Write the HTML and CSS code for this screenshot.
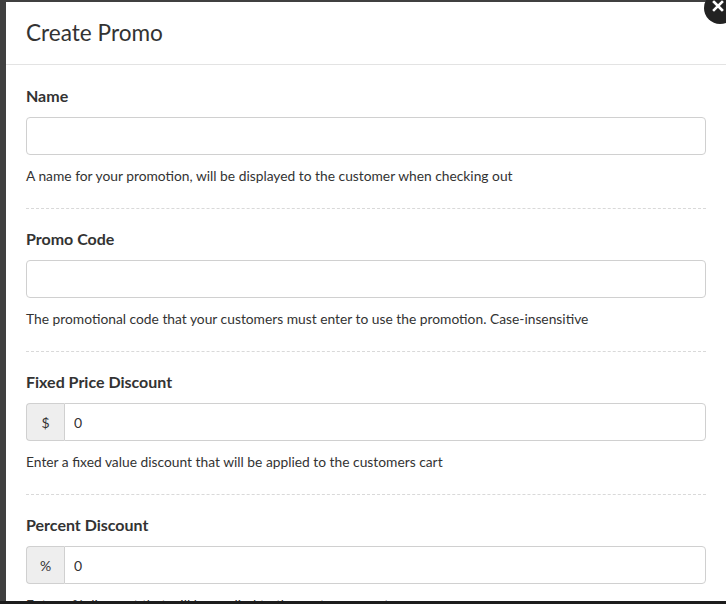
FILE: index.html
```html
<!DOCTYPE html>
<html lang="en">
<head>
<meta charset="utf-8">
<title>Create Promo</title>
<link rel="stylesheet" href="styles.css">
</head>
<body>
<div class="screen">
  <div class="stage">
    <div class="modal">
      <button class="close" type="button" aria-label="Close">
        <svg width="12" height="12" viewBox="0 0 12 12"><path d="M2 2 L10 10 M10 2 L2 10" stroke="#fff" stroke-width="2.6" stroke-linecap="square"/></svg>
      </button>
      <div class="modal-header">
        <h4 class="modal-title">Create Promo</h4>
      </div>
      <div class="modal-body">
        <div class="field">
          <label class="label">Name</label>
          <input class="input" type="text">
          <p class="help">A name for your promotion, will be displayed to the customer when checking out</p>
        </div>
        <div class="field">
          <label class="label">Promo Code</label>
          <input class="input" type="text">
          <p class="help">The promotional code that your customers must enter to use the promotion. Case-insensitive</p>
        </div>
        <div class="field">
          <label class="label">Fixed Price Discount</label>
          <div class="input-group">
            <span class="addon">$</span>
            <input class="input grouped" type="text" value="0">
          </div>
          <p class="help">Enter a fixed value discount that will be applied to the customers cart</p>
        </div>
        <div class="field">
          <label class="label">Percent Discount</label>
          <div class="input-group">
            <span class="addon">%</span>
            <input class="input grouped" type="text" value="0">
          </div>
          <p class="help">Enter a % discount that will be applied to the customers cart</p>
        </div>
      </div>
    </div>
  </div>
  <div class="bottom-bar"></div>
</div>
</body>
</html>
```

FILE: styles.css
```css
* { box-sizing: border-box; }
html, body {
  margin: 0;
  padding: 0;
  height: 604px;
  overflow: hidden;
  background: #404040;
  font-family: Lato, "Liberation Sans", sans-serif;
  color: #333;
}
.screen {
  height: 604px;
  display: flex;
  flex-direction: column;
}
.stage {
  flex: 1;
  min-height: 0;
  overflow: hidden;
  padding: 2px 0 0 6px;
}
.bottom-bar {
  height: 3px;
  background: #1c1c1c;
}
.modal {
  position: relative;
  width: 720px;
  background: #fff;
  min-height: 700px;
}
.close {
  position: absolute;
  top: -10px;
  right: -10px;
  width: 32px;
  height: 32px;
  border-radius: 50%;
  background: #222;
  border: 0;
  padding: 0;
  display: flex;
  align-items: center;
  justify-content: center;
}
.close svg { display: block; margin: 0 4px 4px 0; }
.modal-header {
  height: 63px;
  border-bottom: 1px solid #e3e3e3;
  display: flex;
  align-items: center;
  padding: 0 20px;
}
.modal-title {
  margin: 0;
  font-size: 22.6px;
  font-weight: 400;
  line-height: 26px;
  color: #333;
}
.modal-body {
  padding: 22px 20px 0;
}
.field {
  border-bottom: 1px dashed #d9d9d9;
  padding-bottom: 23px;
  margin-bottom: 21px;
}
.label {
  display: block;
  font-size: 16px;
  font-weight: 700;
  line-height: 18px;
  margin-bottom: 12px;
  color: #333;
}
.input {
  display: block;
  width: 100%;
  height: 38px;
  border: 1px solid #d0d0d0;
  border-radius: 4px;
  padding: 0 9px;
  font-family: Lato, "Liberation Sans", sans-serif;
  font-size: 14px;
  color: #333;
  background: #fff;
  outline: none;
}
.input-group {
  display: flex;
  height: 38px;
}
.addon {
  width: 38px;
  flex: none;
  display: flex;
  align-items: center;
  justify-content: center;
  background: #eee;
  border: 1px solid #d0d0d0;
  border-right: 0;
  border-radius: 4px 0 0 4px;
  font-size: 14px;
  color: #333;
}
.input.grouped {
  flex: 1;
  border-radius: 0 4px 4px 0;
}
.help {
  margin: 12px 0 0;
  font-size: 13.8px;
  line-height: 18px;
  color: #333;
}
```
